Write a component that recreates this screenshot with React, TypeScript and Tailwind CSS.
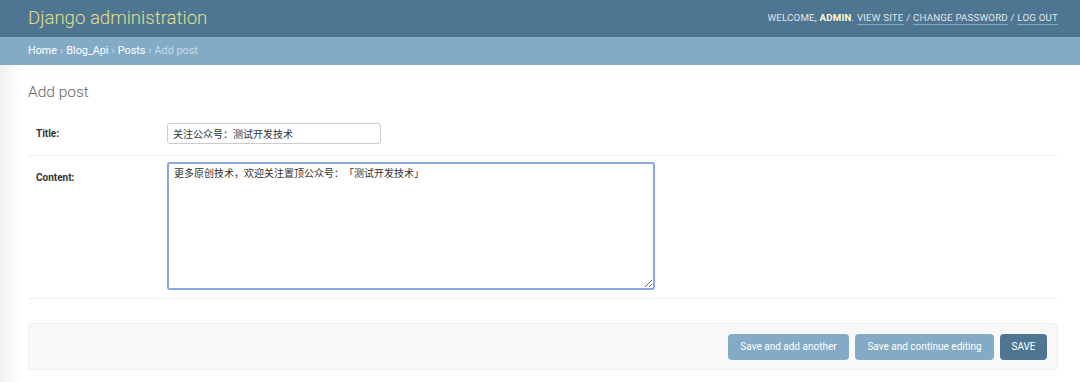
import React from 'react';

const cjk = "font-['Roboto','Noto_Sans_CJK_SC',sans-serif]";

const App: React.FC = () => {
  return (
    <div className={`min-h-screen bg-white ${cjk} text-[#333]`}>
      {/* Header */}
      <div className="h-[37px] bg-[#4e7591] pl-[28px] pr-[22px] flex items-center justify-between">
        <h1 className="text-[18.6px] font-light text-[#e3e08c] leading-none">Django administration</h1>
        <div className="text-[9.7px] text-[#e2e8ea] tracking-[0.2px] uppercase">
          Welcome, <strong className="font-bold text-[#fdfdd0]">admin</strong>.{' '}
          <a className="border-b border-[#8aa7bb] pb-[1px]">View site</a> /{' '}
          <a className="border-b border-[#8aa7bb] pb-[1px]">Change password</a> /{' '}
          <a className="border-b border-[#8aa7bb] pb-[1px]">Log out</a>
        </div>
      </div>

      {/* Breadcrumbs */}
      <div className="h-[28px] bg-[#84abc6] px-[28px] flex items-center text-[10.8px] text-white">
        <a>Home</a>
        <span className="mx-[3px] text-[#c9dbe7]">›</span>
        <a>Blog_Api</a>
        <span className="mx-[3px] text-[#c9dbe7]">›</span>
        <a>Posts</a>
        <span className="mx-[3px] text-[#c9dbe7]">›</span>
        <span className="text-[#c9dbe7]">Add post</span>
      </div>

      {/* Content */}
      <div className="pr-[22px] pl-[28px] pt-[17px] pb-[13px] bg-[linear-gradient(to_right,#f1f1f1,#ffffff_22px)]">
        <h2 className="text-[15.5px] font-light text-[#666] leading-[20px] mb-[13px]">Add post</h2>

        <div>
          <div className="flex items-start px-[8px] pt-[8px] pb-[11px] border-b border-[#eee]">
            <label className="w-[131px] pt-[3px] text-[10px] font-bold text-[#333]">Title:</label>
            <input
              defaultValue="关注公众号：测试开发技术"
              className="w-[214px] h-[21px] px-[5px] border border-[#ccc] rounded-[3px] text-[10px] text-[#333] outline-none [text-spacing-trim:space-all]"
            />
          </div>
          <div className="flex items-start px-[8px] pt-[6px] pb-[8px] border-b border-[#eee]">
            <label className="w-[131px] pt-[8px] text-[10px] font-bold text-[#333]">Content:</label>
            <textarea
              defaultValue="更多原创技术，欢迎关注置顶公众号：「测试开发技术」"
              className="w-[488px] h-[128px] px-[5px] py-[3px] border-2 border-[#87a9e0] rounded-[3px] text-[10px] leading-[14px] text-[#333] outline-none resize [text-spacing-trim:space-all]"
            />
          </div>
        </div>

        <div className="mt-[24px] h-[47px] bg-[#f8f8f8] border border-[#eee] rounded-[4px] flex items-center justify-end gap-[6px] pr-[10px]">
          <button className="h-[26px] w-[121px] rounded-[4px] bg-[#84abc6] text-white text-[10px]">Save and add another</button>
          <button className="h-[26px] w-[139px] rounded-[4px] bg-[#84abc6] text-white text-[10px]">Save and continue editing</button>
          <button className="h-[26px] w-[47px] rounded-[4px] bg-[#4e7591] text-white text-[10px]">SAVE</button>
        </div>
      </div>
    </div>
  );
};

export default App;
